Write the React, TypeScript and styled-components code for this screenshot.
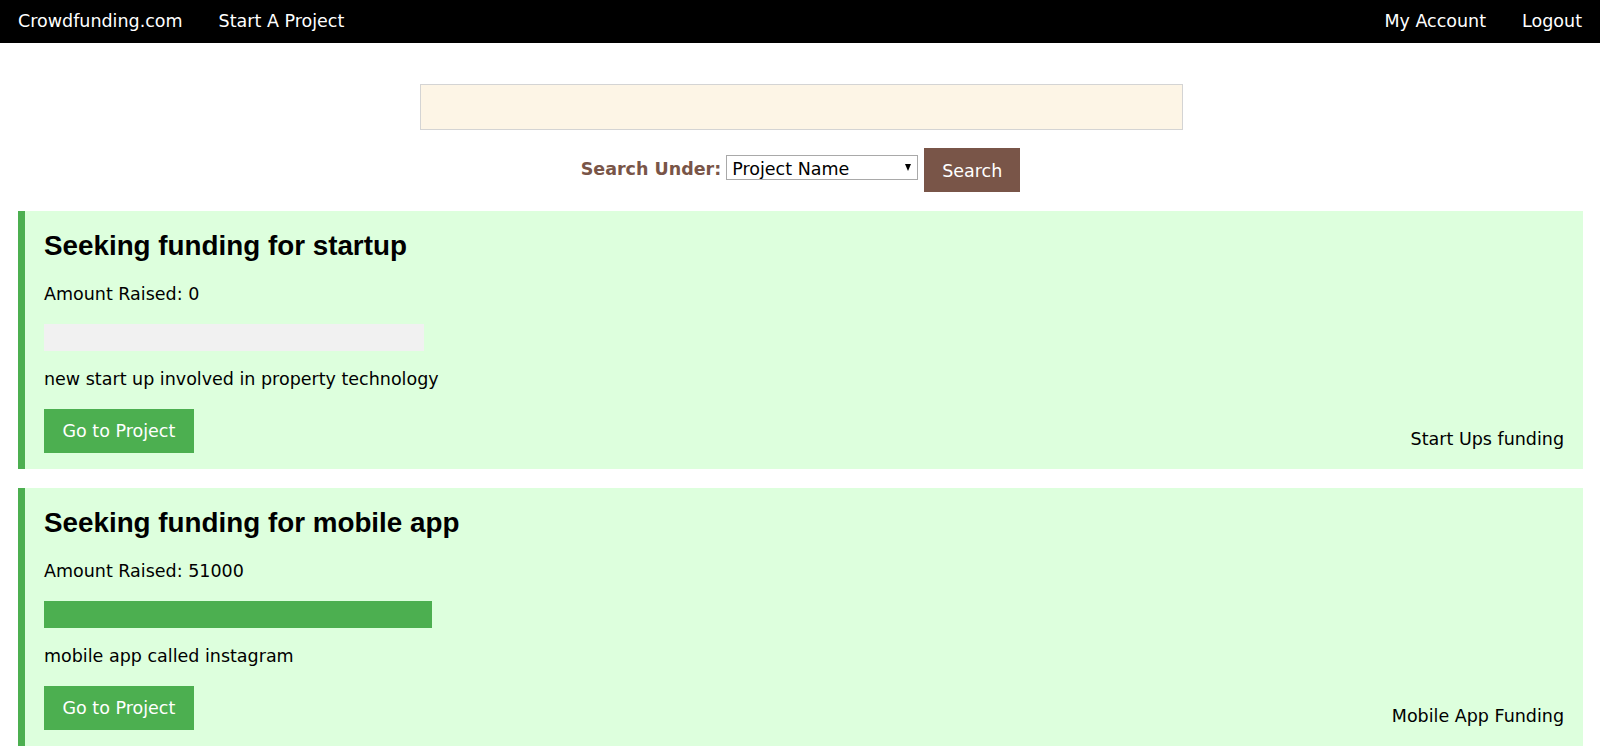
import React from "react";
import styled, { createGlobalStyle } from "styled-components";

const GlobalStyle = createGlobalStyle`
  html, body {
    margin: 0;
    padding: 0;
    background: #ffffff;
  }
  body {
    font-family: "DejaVu Sans", Verdana, sans-serif;
    font-size: 17.5px;
    line-height: 1.48;
    color: #000;
  }
  * { box-sizing: border-box; }
`;

const Nav = styled.nav`
  display: flex;
  justify-content: space-between;
  align-items: center;
  height: 43px;
  background: #000;
  color: #fff;
`;

const NavGroup = styled.div`
  display: flex;
  align-items: center;
  height: 100%;
`;

const NavLink = styled.a`
  display: flex;
  align-items: center;
  height: 100%;
  padding: 1px 18px 0 18px;
  color: #fff;
  text-decoration: none;
  white-space: nowrap;
`;

const Main = styled.main`
  padding: 0 17px 0 18px;
`;

const SearchForm = styled.form`
  display: flex;
  flex-direction: column;
  align-items: center;
  padding-top: 41px;
`;

const SearchInput = styled.input`
  display: block;
  width: 763px;
  height: 46px;
  margin-left: 1px;
  border: 1px solid #d4d4d4;
  background: #fdf5e6;
  padding: 8px;
  font: inherit;
  outline: none;
`;

const SearchRow = styled.div`
  display: flex;
  align-items: center;
  height: 44px;
  margin-top: 18px;
`;

const SearchLabel = styled.label`
  font-weight: bold;
  color: #795548;
  margin-right: 5px;
`;

const SelectWrap = styled.div`
  position: relative;
  align-self: flex-start;
  margin-top: 7px;
  margin-right: 6px;
`;

const Select = styled.select`
  appearance: none;
  -webkit-appearance: none;
  display: block;
  width: 192px;
  height: 25px;
  padding: 3px 20px 0 5px;
  border: 1px solid #a9a9a9;
  border-radius: 0;
  background: #fff;
  font: inherit;
  line-height: 21px;
  color: #000;
  outline: none;
`;

const SelectArrow = styled.span`
  position: absolute;
  right: 7px;
  top: 9px;
  width: 0;
  height: 0;
  border-left: 3.5px solid transparent;
  border-right: 3.5px solid transparent;
  border-top: 7px solid #000;
  pointer-events: none;
`;

const SearchButton = styled.button`
  height: 44px;
  padding: 3px 18px 0 18px;
  border: none;
  background: #795548;
  color: #fff;
  font: inherit;
  cursor: pointer;
`;

const ProjectList = styled.section`
  display: flex;
  flex-direction: column;
  gap: 19px;
  margin-top: 19px;
`;

const Card = styled.article`
  background: #ddffdd;
  border-left: 7px solid #4caf50;
  padding: 18px 19px 16px 19px;
`;

const CardTitle = styled.h3`
  margin: 0 0 20px 0;
  font-family: "Liberation Sans", Arial, sans-serif;
  font-weight: bold;
  font-size: 27.8px;
  line-height: 33px;
`;

const CardText = styled.p`
  margin: 0;
`;

const ProgressTrack = styled.div`
  width: 25%;
  height: 27px;
  margin: 16px 0;
  background: #f1f1f1;
`;

const ProgressFill = styled.div`
  height: 100%;
  background: #4caf50;
`;

const CardFooter = styled.div`
  display: flex;
  justify-content: space-between;
  align-items: flex-end;
  margin-top: 16px;
`;

const ProjectButton = styled.button`
  height: 44px;
  padding: 3px 18.5px 0 18.5px;
  border: none;
  background: #4caf50;
  color: #fff;
  font: inherit;
  cursor: pointer;
`;

const Category = styled.span`
  white-space: nowrap;
`;

type Project = {
  title: string;
  raised: number;
  goal: number;
  description: string;
  category: string;
};

const projects: Project[] = [
  {
    title: "Seeking funding for startup",
    raised: 0,
    goal: 50000,
    description: "new start up involved in property technology",
    category: "Start Ups funding",
  },
  {
    title: "Seeking funding for mobile app",
    raised: 51000,
    goal: 50000,
    description: "mobile app called instagram",
    category: "Mobile App Funding",
  },
];

export default function App() {
  return (
    <>
      <GlobalStyle />
      <Nav>
        <NavGroup>
          <NavLink href="#">Crowdfunding.com</NavLink>
          <NavLink href="#">Start A Project</NavLink>
        </NavGroup>
        <NavGroup>
          <NavLink href="#">My Account</NavLink>
          <NavLink href="#">Logout</NavLink>
        </NavGroup>
      </Nav>
      <Main>
        <SearchForm onSubmit={(e) => e.preventDefault()}>
          <SearchInput type="text" />
          <SearchRow>
            <SearchLabel>Search Under:</SearchLabel>
            <SelectWrap>
              <Select defaultValue="name">
                <option value="name">Project Name</option>
                <option value="category">Category</option>
              </Select>
              <SelectArrow />
            </SelectWrap>
            <SearchButton type="submit">Search</SearchButton>
          </SearchRow>
        </SearchForm>
        <ProjectList>
          {projects.map((p) => (
            <Card key={p.title}>
              <CardTitle>{p.title}</CardTitle>
              <CardText>Amount Raised: {p.raised}</CardText>
              <ProgressTrack>
                <ProgressFill style={{ width: `${(p.raised / p.goal) * 100}%` }} />
              </ProgressTrack>
              <CardText>{p.description}</CardText>
              <CardFooter>
                <ProjectButton>Go to Project</ProjectButton>
                <Category>{p.category}</Category>
              </CardFooter>
            </Card>
          ))}
        </ProjectList>
      </Main>
    </>
  );
}
